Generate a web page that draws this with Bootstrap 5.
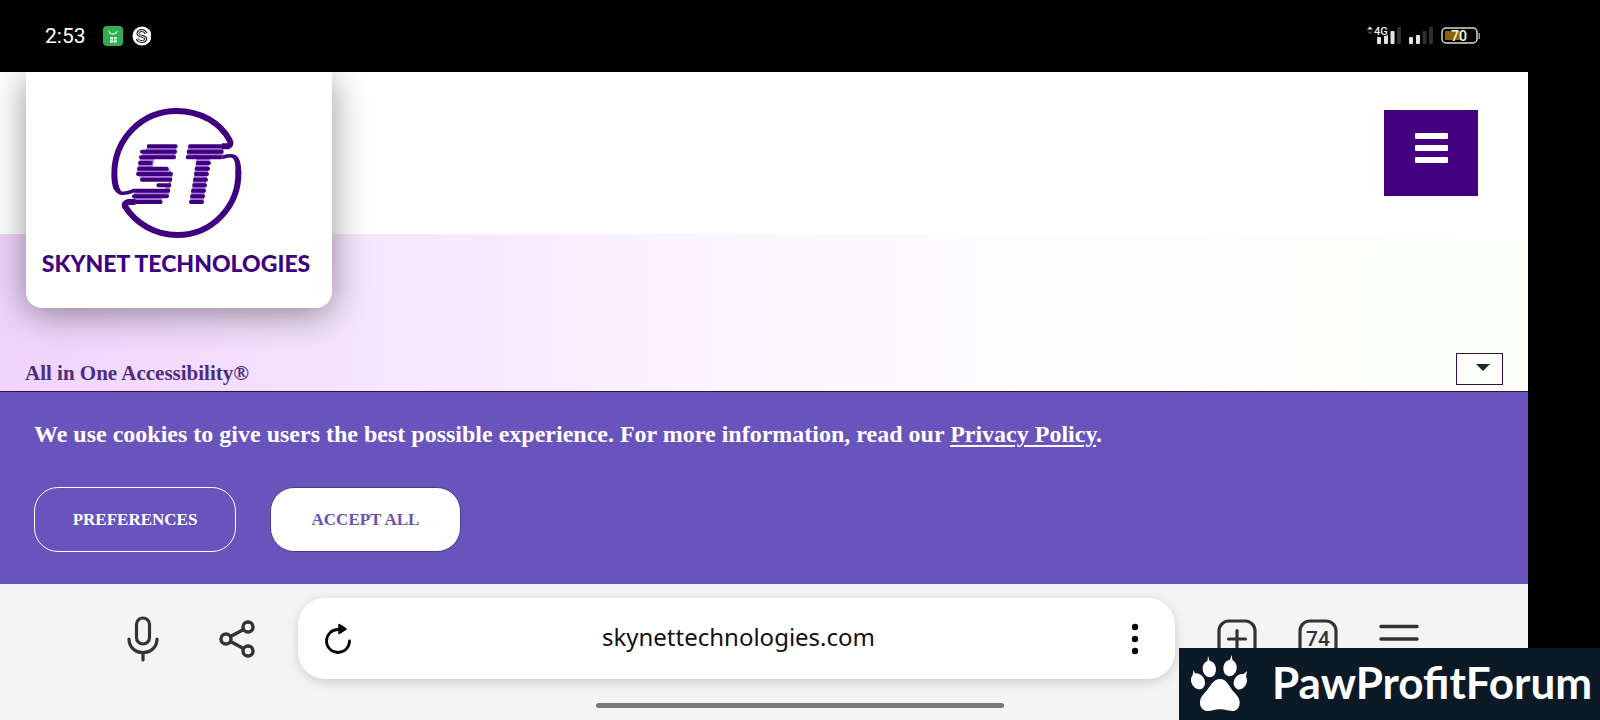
<!DOCTYPE html>
<html lang="en">
<head>
<meta charset="utf-8">
<meta name="viewport" content="width=device-width, initial-scale=1">
<title>Skynet Technologies</title>
<link href="https://cdn.jsdelivr.net/npm/bootstrap@5.3.0/dist/css/bootstrap.min.css" rel="stylesheet">
<style>
  body { background: #000; min-height: 100vh; overflow-x: hidden; }
  .serif { font-family: "Liberation Serif", serif; font-weight: 700; }
  .device { margin-right: 72px; }
  .status { height: 72px; background: #000; z-index: 3; padding: 0 47px 0 45px; }
  .clock { font: 400 21px/24px Roboto, sans-serif; color: #fff; margin-right: 17px; }
  .site-head { height: 162px; background: #fff; padding: 38px 50px 0 0; }
  .brand { position: absolute; left: 26px; top: 0; width: 306px; height: 236px; z-index: 2; background: #fff; border-radius: 0 0 16px 16px; box-shadow: 0 6px 36px rgba(0,0,0,.42); color: #3f007f; text-decoration: none; padding: 35px 6px 0 0; }
  .brand-name { font: 900 23px/28px Lato, sans-serif; margin-top: 9px; white-space: nowrap; }
  .menu-btn { width: 94px; height: 86px; background: #43007f; border: 0; border-radius: 0; padding: 0 0 10px; }
  .hero { height: 157px; padding: 0 25px 6px; background: linear-gradient(90deg, #f0d3fc 0%, #f3defd 14%, #f7e9fe 30%, #fcf7ff 50%, #fdfcfe 66%, #fcfffa 100%); }
  .hero-title { font-size: 21px; line-height: 24px; color: #4b2c82; margin: 0; }
  .lang { width: 47px; height: 32px; border: 1px solid #351047; border-radius: 0; background: transparent url("data:image/svg+xml,%3Csvg xmlns='http://www.w3.org/2000/svg' viewBox='0 0 14 7'%3E%3Cpath d='M0 0h14L7 7z' fill='%23212529'/%3E%3C/svg%3E") no-repeat 19px 10px / 14px 7px; padding: 0; }
  .cookies { height: 193px; background: #6953bd; border-top: 1px solid #351047; color: #fff; padding: 26px 34px 0; }
  .cookies p { font-size: 24px; line-height: 32px; margin: 0 0 37px; }
  .cookies a { color: #fff; text-decoration-thickness: 2px; text-underline-offset: 3px; }
  .choices { gap: 34px; }
  .pill { height: 65px; border-radius: 24px; font-size: 17px; padding: 0; }
  .pill-line { width: 202px; color: #fff; border: 1px solid #fff; }
  .pill-fill { width: 191px; color: #6953b0; background: #fff; border: 1px solid #4b3a8c; }
  .dock { height: 136px; background: #f4f4f4; padding: 14px 109px 0 127px; }
  .dock svg, .brand svg, .status svg, .forum svg { display: block; }
  .bare { border: 0; background: none; padding: 0; }
  .share { margin-left: 60px; }
  .tools { gap: 41px; }
  .address { height: 81px; border-radius: 27px; background: #fff; box-shadow: 0 3px 12px rgba(0,0,0,.16); padding: 0 36px 0 26px; margin: 0 42px; }
  .address input { border: 0; background: none; text-align: center; font: 400 24px/32px "Noto Sans", sans-serif; color: #111; min-width: 0; outline: 0; padding: 0 6px 4px 0; }
  .handle { position: absolute; left: 39%; right: 34.3%; bottom: 12px; height: 5px; border-radius: 3px; background: #777; }
  .tab-count { font: 500 21px/21px Roboto, sans-serif; fill: #333; }
  .forum { position: absolute; right: 0; bottom: 0; height: 72px; width: 421px; background: #0b1a26; color: #fff; z-index: 4; padding-left: 11px; font: 700 44px/64px Lato, sans-serif; white-space: nowrap; }
</style>
</head>
<body class="position-relative">
<div class="device position-relative">
  <div class="status position-relative d-flex align-items-center justify-content-between">
    <div class="d-flex align-items-center">
      <span class="clock">2:53</span>
      <svg width="48" height="22" viewBox="0 0 48 22" aria-hidden="true">
        <rect x="0" y="1" width="20" height="20" rx="4" fill="#32ad53"/>
        <path d="M6 6q.5 3 4 3t4-3" fill="none" stroke="#d5f5dc" stroke-width="1.3"/>
        <g fill="#d5f5dc"><rect x="7" y="12" width="3" height="2.500"/><rect x="10.700" y="12" width="3" height="2.500"/><rect x="7" y="15.200" width="3" height="2.500"/><rect x="10.700" y="15.200" width="3" height="2.500"/></g>
        <circle cx="39" cy="11" r="9.500" fill="#fff"/>
        <path d="M43 8.500q-1-3-4.300-3t-3.900 2.700q0 2.200 3.900 3t4.200 2.600q-.4 2.700-4.200 2.700t-4.400-2.700" fill="none" stroke="#222" stroke-width="2.800"/>
        <path d="M43 8.500q-1-3-4.300-3t-3.900 2.700q0 2.200 3.900 3t4.200 2.600q-.4 2.700-4.200 2.700t-4.400-2.700" fill="none" stroke="#fff" stroke-width="1"/>
      </svg>
    </div>
    <svg width="114" height="22" viewBox="0 0 114 22" role="img" aria-label="4G signal, battery 70">
      <path d="M0 4.500L3 1.500l3 3z" fill="#ddd"/><path d="M0 6.500L3 9.500l3-3z" fill="#444"/>
      <g fill="#e4e4e4"><rect x="10" y="12" width="4" height="7" rx="1"/><rect x="17" y="10" width="4" height="9" rx="1"/><rect x="23.500" y="6" width="4" height="13" rx="1"/><rect x="42" y="12" width="4" height="7" rx="1"/><rect x="49" y="10" width="4" height="9" rx="1"/></g>
      <g fill="#303030"><rect x="30" y="2" width="4" height="17" rx="1"/><rect x="55.500" y="6" width="4" height="13" rx="1"/><rect x="62" y="2" width="4" height="17" rx="1"/></g>
      <text x="7" y="10" font-family="Roboto, sans-serif" font-size="11" font-weight="500" fill="#eee" stroke="#000" stroke-width="2" paint-order="stroke">4G</text>
      <rect x="75" y="3" width="35" height="15" rx="4" fill="none" stroke="#d8d8d8" stroke-width="1.500"/>
      <rect x="78" y="6" width="16" height="9" rx="1" fill="#8b6308"/><path d="M111.500 8h1.500v6h-1.500z" fill="#999"/>
      <text x="84" y="16" font-family="Roboto, sans-serif" font-size="14" font-weight="500" fill="#fff3d6">70</text>
    </svg>
  </div>

  <header class="site-head position-relative d-flex justify-content-end align-items-start">
    <a class="brand d-flex flex-column align-items-center" href="#" aria-label="Skynet Technologies home">
      <svg width="133" height="133" viewBox="328 141 399 399" aria-hidden="true">
        <path fill="#a97fd4" d="M442 257H529L523 294H462L456 322H502L516 342 503 411H484V427H398L400 390H490L510 357H422L408 342 418 294ZM562 257H668V294H628L608 427H567L588 294H558Z"/>
        <path fill="none" stroke="#3f007f" stroke-width="18" d="M664 259h18q12-5 5-18C660 189 600 153 528 153 424 153 341 236 341 342c0 18 2 33 7 44"/>
        <path fill="#3f007f" d="M339 385q8 20 25 20 17 1 40-9l-2-11q-29 12-40 9-3-2-5-11zM666 286q24-8 39-1 17 9 17 55h-18q2-39-8-45-8-6-31 3z"/>
        <path fill="none" stroke="#3f007f" stroke-width="18" d="M713 335C716 438 634 525 530 525 464 525 405 490 373 439q-4-10 11-13h20"/>
        <path stroke="#3f007f" stroke-width="12" stroke-linecap="round" d="M444 259h81M424 275.500h99M421 292h99M418 309h32M415 326h83M412 342h99M424 359h85M473 375.500h33M406 392h97M400 409h99M392 426h88M568 259h100M564 275.500h99M561 292h99M591 309h34M588 326h34M586 342h33M583 359h33M581 375.500h32M577 392h33M574 409h33M571 426h33"/>
      </svg>
      <span class="brand-name">SKYNET TECHNOLOGIES</span>
    </a>
    <button class="menu-btn btn d-flex align-items-center justify-content-center" type="button" aria-label="Menu">
      <svg width="33" height="30" viewBox="0 0 33 30" fill="#fff"><rect width="33" height="6" rx="1"/><rect y="12" width="33" height="6" rx="1"/><rect y="24" width="33" height="6" rx="1"/></svg>
    </button>
  </header>

  <section class="hero d-flex align-items-end justify-content-between">
    <h1 class="hero-title serif">All in One Accessibility®</h1>
    <select class="form-select lang" aria-label="Language"><option></option></select>
  </section>

  <section class="cookies serif">
    <p>We use cookies to give users the best possible experience. For more information, read our <a href="#">Privacy Policy</a>.</p>
    <div class="choices d-flex">
      <button class="btn pill pill-line serif" type="button">PREFERENCES</button>
      <button class="btn pill pill-fill serif" type="button">ACCEPT ALL</button>
    </div>
  </section>

  <nav class="dock position-relative d-flex align-items-start" aria-label="Browser">
    <div class="d-flex align-items-center w-100">
      <button class="bare" type="button" aria-label="Voice search"><svg width="32" height="46" viewBox="0 0 32 46" fill="none" stroke="#333" stroke-width="3.200" stroke-linecap="round"><rect x="9.500" y="2" width="13" height="26" rx="6.500"/><path d="M2 23c0 8 6 13.500 14 13.500S30 31 30 23M16 37v7"/></svg></button>
      <button class="bare share" type="button" aria-label="Share"><svg width="37" height="38" viewBox="0 0 37 38" fill="none" stroke="#333" stroke-width="3.400"><circle cx="7" cy="19" r="5"/><circle cx="29" cy="7" r="5"/><circle cx="29" cy="31" r="5"/><path d="M11.500 16.500l13-7M11.500 21.500l13 7"/></svg></button>
      <div class="address d-flex align-items-center flex-grow-1">
        <button class="bare" type="button" aria-label="Reload"><svg width="28" height="32" viewBox="0 0 28 32" fill="none" stroke="#000" stroke-width="2.800" stroke-linecap="round"><path d="M14 6.500A11.500 11.500 0 1 0 25.500 18"/><path d="M15 1.500v9l7-4.500z" fill="#000" stroke-width="1.500" stroke-linejoin="round"/></svg></button>
        <input class="flex-grow-1" type="text" value="skynettechnologies.com" aria-label="Address">
        <button class="bare" type="button" aria-label="Page options"><svg width="8" height="32" viewBox="0 0 8 32"><circle cx="4" cy="4" r="3.200"/><circle cx="4" cy="16" r="3.200"/><circle cx="4" cy="28" r="3.200"/></svg></button>
      </div>
      <div class="tools d-flex">
        <button class="bare" type="button" aria-label="New tab"><svg width="40" height="40" viewBox="0 0 40 40" fill="none" stroke="#333" stroke-width="3.200" stroke-linecap="round"><rect x="2" y="2" width="36" height="36" rx="10"/><path d="M11.500 20h17M20 11.500v17"/></svg></button>
        <button class="bare" type="button" aria-label="Tabs"><svg width="40" height="40" viewBox="0 0 40 40"><rect x="2" y="2" width="36" height="36" rx="10" fill="none" stroke="#333" stroke-width="3.200"/><text class="tab-count" x="20" y="27" text-anchor="middle">74</text></svg></button>
        <button class="bare" type="button" aria-label="Browser menu"><svg width="40" height="40" viewBox="0 0 40 40" stroke="#333" stroke-width="3.500" stroke-linecap="round"><path d="M2 7.500h36M2 20h36"/></svg></button>
      </div>
    </div>
    <div class="handle"></div>
  </nav>
</div>
<div class="forum d-flex align-items-center">
  <svg class="me-4" width="58" height="58" viewBox="90 218 174 174" fill="#fff" aria-hidden="true">
    <path d="M142 239l2-19 5 17zM209 236l6-18 3 19zM98 279l3-17 5 15zM246 279l15-13-3 18z"/>
    <ellipse cx="148" cy="260" rx="20" ry="25" transform="rotate(-8 148 260)"/><ellipse cx="210" cy="257" rx="20" ry="25" transform="rotate(8 210 257)"/>
    <ellipse cx="114" cy="297" rx="20" ry="25" transform="rotate(-28 114 297)"/><ellipse cx="241" cy="298" rx="19" ry="24" transform="rotate(25 241 298)"/>
    <path d="M180 290c-19 0-28 20-38 32-9 12-22 20-22 39 0 15 10 25 24 25 12 0 20-5 36-5s24 5 36 5c14 0 23-10 23-25 0-19-14-27-23-39-10-12-17-32-36-32z"/>
  </svg>
  <span class="pb-1">PawProfitForum</span>
</div>
<script src="https://cdn.jsdelivr.net/npm/bootstrap@5.3.0/dist/js/bootstrap.bundle.min.js"></script>
</body>
</html>
